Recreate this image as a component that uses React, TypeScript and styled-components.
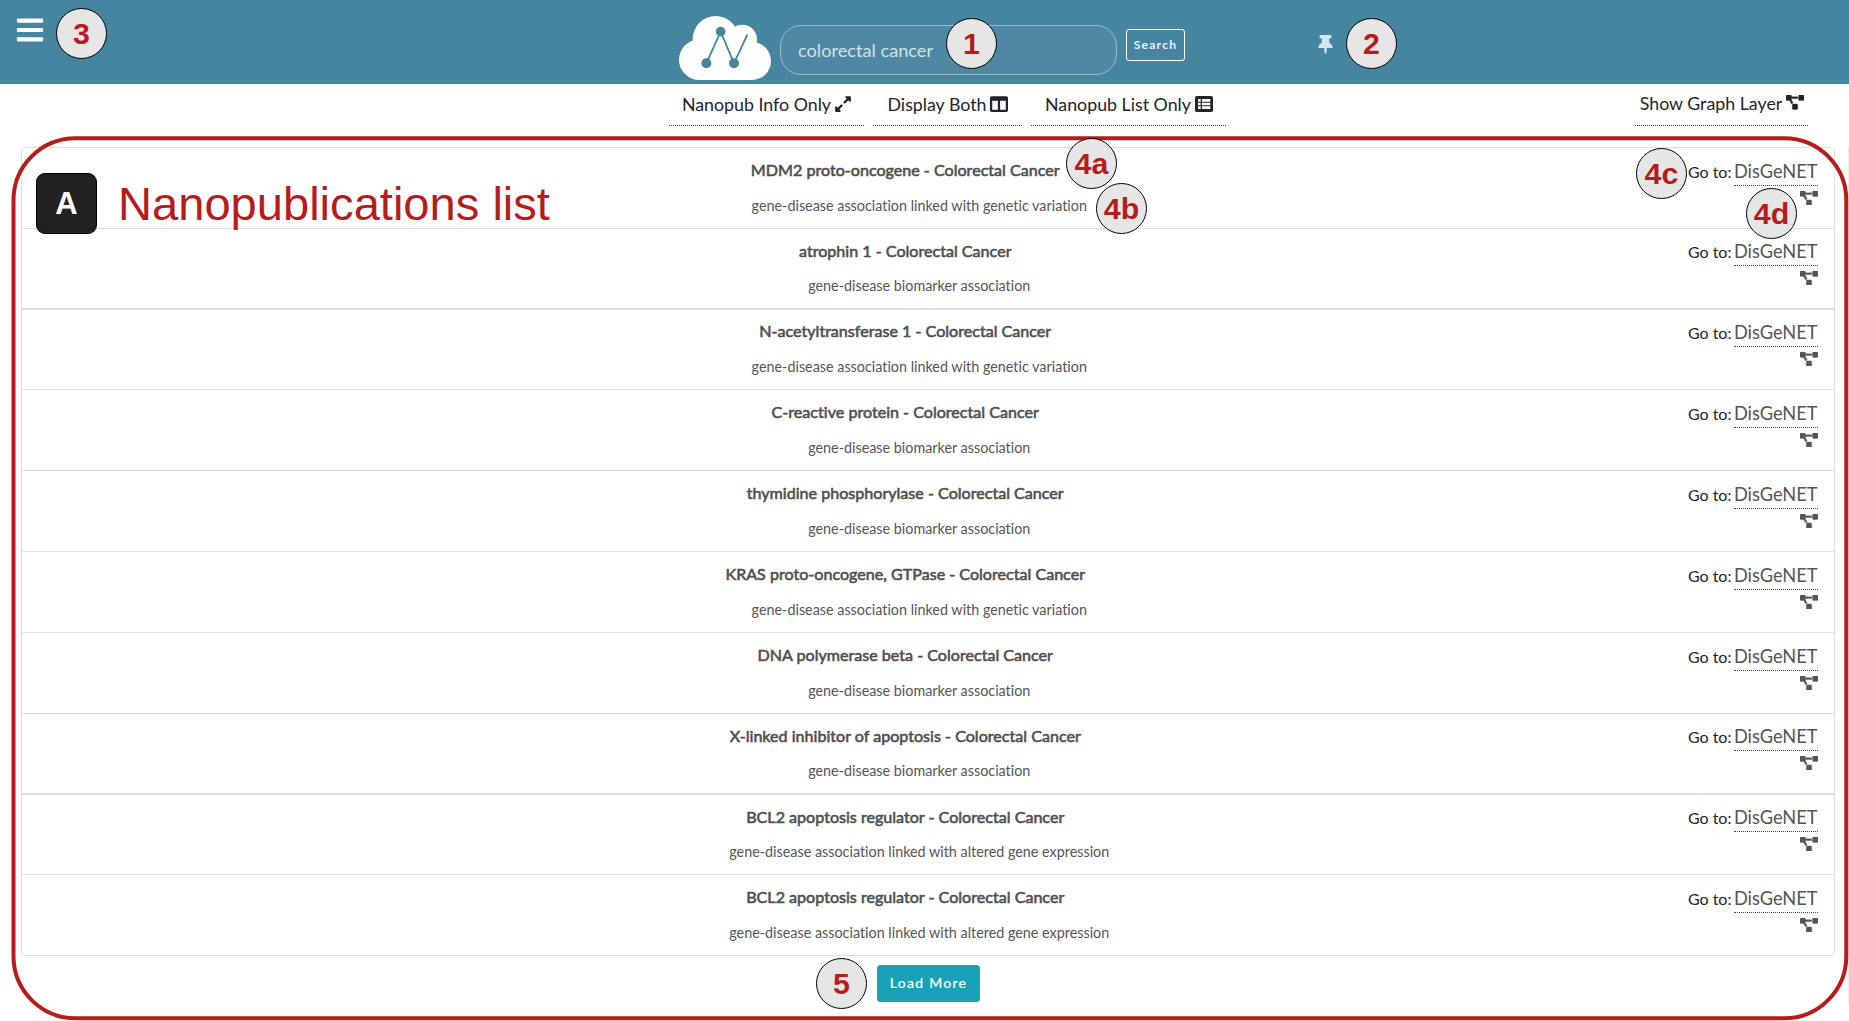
import React from "react";
import styled, { createGlobalStyle } from "styled-components";
import {
  FaBars,
  FaColumns,
  FaExpandAlt,
  FaProjectDiagram,
  FaThumbtack,
} from "react-icons/fa";

const GlobalStyle = createGlobalStyle`
  *, *::before, *::after { box-sizing: border-box; }
  html, body { margin: 0; padding: 0; background: #fff; overflow: hidden; }
  body { font-family: Lato, "Open Sans", sans-serif; color: #212529; font-variant-ligatures: none; }
  svg { display: block; flex: none; }
`;

const Page = styled.div`
  position: relative;
  width: 1849px;
  height: 1021px;
  display: flex;
  flex-direction: column;
  overflow: hidden;
`;

const Header = styled.header`
  height: 84px;
  flex: none;
  display: flex;
  align-items: flex-start;
  background: #4685a0;
`;

const MenuButton = styled.button`
  width: 679px;
  padding: 15px 0 0 15px;
  border: 0;
  background: none;
  color: #fff;
`;

const Logo = styled.svg`
  width: 92px;
  height: 64px;
  margin: 16px 9px 0 0;
`;

const SearchInput = styled.div`
  width: 337px;
  height: 50px;
  margin: 25px 9px 0 0;
  padding: 0 0 0 17px;
  display: flex;
  align-items: center;
  border: 1px solid #9bbdcb;
  border-radius: 21px;
  background: #4e88a2;
  color: #d3e2e9;
  font-size: 18.2px;
`;

const SearchButton = styled.button`
  width: 59px;
  height: 32px;
  margin: 29px 130.5px 0 0;
  padding: 0 0 1px 0;
  border: 1px solid #fff;
  border-radius: 3px;
  background: none;
  color: #e9f2f6;
  font: 700 12.2px Lato, sans-serif;
  letter-spacing: 1.2px;
`;

const Pin = styled.span`
  margin-top: 35px;
  color: #d5e5ec;
`;

const Toolbar = styled.nav`
  height: 63px;
  flex: none;
  display: flex;
  padding-left: 669px;
`;

const ViewGroup = styled.div`
  display: flex;
  gap: 9px;
`;

const ViewButton = styled.button<{ $width: number; $gap: number; $raise?: boolean }>`
  width: ${(p) => p.$width}px;
  height: 42px;
  padding: 0 0 ${(p) => (p.$raise ? 4 : 1)}px 1px;
  display: flex;
  align-items: center;
  justify-content: center;
  gap: ${(p) => p.$gap}px;
  border: 0;
  border-bottom: 1px dotted #444;
  background: none;
  color: #212529;
  font: 400 17.8px Lato, sans-serif;
  font-variant-ligatures: none;
  white-space: nowrap;
`;

const GraphToggle = styled.div`
  margin-left: 409px;
`;

const List = styled.ul`
  list-style: none;
  margin: 0 0 0 21px;
  padding: 0;
  width: 1814px;
  height: 809px;
  flex: none;
  border: 1px solid #dedede;
  border-radius: 4px;
`;

const Row = styled.li<{ $height: number; $line: number }>`
  height: ${(p) => p.$height}px;
  display: grid;
  grid-template-columns: 1fr 130px;
  padding-right: 16.5px;
  border-bottom: ${(p) => p.$line}px solid #dedede;
`;

const Body = styled.div`
  text-align: center;
`;

const Title = styled.h2<{ $lift: number }>`
  margin: 0;
  padding: ${(p) => 11 - p.$lift}px 0 ${(p) => p.$lift}px 101px;
  color: #4f4f4f;
  font-size: 16.1px;
  font-weight: 400;
  line-height: 22px;
  -webkit-text-stroke: 0.6px #4f4f4f;
`;

const Kind = styled.p<{ $lift: number }>`
  margin: 0;
  padding: ${(p) => 15 - p.$lift}px 0 0 129px;
  color: #555;
  font-size: 14.35px;
  line-height: 20px;
`;

const Actions = styled.div<{ $lift: number }>`
  margin-top: -${(p) => p.$lift}px;
  display: flex;
  flex-direction: column;
  align-items: flex-end;
  color: #555;
`;

const Source = styled.div`
  height: 38px;
  display: flex;
  align-items: baseline;
  padding-top: 11px;
  gap: 2.5px;
  color: #212529;
  font-size: 16px;
  line-height: 24px;
  white-space: nowrap;
`;

const SourceLink = styled.a`
  height: 27px;
  border-bottom: 1px dotted #444;
  color: #555;
  font-size: 18.24px;
  line-height: 24px;
`;

const GraphIcon = styled.span`
  margin-top: 5px;
`;

const Footer = styled.footer`
  display: flex;
  padding: 9px 0 0 877px;
`;

const LoadMore = styled.button`
  width: 103px;
  height: 37px;
  padding: 0 0 2px;
  border: 1px solid #3c9aab;
  border-radius: 3px;
  background: #17a2b8;
  color: #fff;
  font: 400 14px Lato, sans-serif;
  letter-spacing: 1.3px;
  -webkit-text-stroke: 0.2px #fff;
`;

const NextPanelEdge = styled.div`
  position: absolute;
  left: 1848px;
  top: 147px;
  width: 1px;
  height: 856px;
  background: #ececec;
`;

const Frame = styled.svg`
  position: absolute;
  left: 0;
  top: 0;
  pointer-events: none;
`;

const Marker = styled.span<{ $x: number; $y: number }>`
  position: absolute;
  left: ${(p) => p.$x}px;
  top: ${(p) => p.$y}px;
  width: 51px;
  height: 51px;
  padding: 0 0 1px 0;
  display: flex;
  align-items: center;
  justify-content: center;
  border: 1px solid #000;
  border-radius: 50%;
  background: #e6e6e6;
  color: #b71c1c;
  font: 700 30.4px "Liberation Sans", Arial, sans-serif;
`;

const SectionTag = styled.div`
  position: absolute;
  left: 36px;
  top: 173px;
  display: flex;
  align-items: center;
`;

const SectionLetter = styled.span`
  width: 61px;
  height: 61px;
  display: flex;
  align-items: center;
  justify-content: center;
  border: 1px solid #000;
  border-radius: 9px;
  background: #212121;
  color: #fff;
  font: 700 31px "Liberation Sans", Arial, sans-serif;
`;

const SectionName = styled.span`
  margin-left: 21px;
  color: #b71c1c;
  white-space: nowrap;
  font: 400 47.1px "Liberation Sans", Arial, sans-serif;
`;

const VARIATION = "gene-disease association linked with genetic variation";
const BIOMARKER = "gene-disease biomarker association";
const EXPRESSION = "gene-disease association linked with altered gene expression";

const nanopubs = [
  { gene: "MDM2 proto-oncogene", kind: VARIATION, height: 81, line: 1, titleLift: 0, lift: 0 },
  { gene: "atrophin 1", kind: BIOMARKER, height: 81, line: 2, titleLift: 0, lift: 1 },
  { gene: "N-acetyltransferase 1", kind: VARIATION, height: 80, line: 1, titleLift: 1, lift: 1 },
  { gene: "C-reactive protein", kind: BIOMARKER, height: 81, line: 1, titleLift: 0, lift: 0 },
  { gene: "thymidine phosphorylase", kind: BIOMARKER, height: 81, line: 1, titleLift: 0, lift: 0 },
  { gene: "KRAS proto-oncogene, GTPase", kind: VARIATION, height: 81, line: 1, titleLift: 0, lift: 0 },
  { gene: "DNA polymerase beta", kind: BIOMARKER, height: 81, line: 1, titleLift: 0, lift: 0 },
  { gene: "X-linked inhibitor of apoptosis", kind: BIOMARKER, height: 81, line: 2, titleLift: 0, lift: 1 },
  { gene: "BCL2 apoptosis regulator", kind: EXPRESSION, height: 80, line: 1, titleLift: 0, lift: 1 },
  { gene: "BCL2 apoptosis regulator", kind: EXPRESSION, height: 80, line: 0, titleLift: 0, lift: 0 },
];

const markers = [
  { label: "1", x: 946, y: 18 },
  { label: "2", x: 1346, y: 18 },
  { label: "3", x: 56, y: 8 },
  { label: "4a", x: 1066, y: 138 },
  { label: "4b", x: 1096, y: 183 },
  { label: "4c", x: 1636, y: 148 },
  { label: "4d", x: 1746, y: 188 },
  { label: "5", x: 816, y: 958 },
];

function CloudLogo() {
  return (
    <Logo viewBox="57 48 276 192" preserveAspectRatio="none">
      <g fill="#fff">
        <circle cx="118" cy="179" r="61" />
        <circle cx="167" cy="117" r="69" />
        <circle cx="247" cy="118" r="44" />
        <circle cx="276" cy="183" r="57" />
        <rect x="118" y="130" width="158" height="110" />
      </g>
      <path d="M139 190L182 95L222 190L262 104" fill="none" stroke="#4685a0" strokeWidth="5.5" />
      <g fill="#4685a0">
        <circle cx="182" cy="95" r="14.5" />
        <circle cx="139" cy="190" r="15" />
        <circle cx="222" cy="190" r="15" />
      </g>
    </Logo>
  );
}

function ListIcon() {
  return (
    <svg width="18" height="16" viewBox="0 0 54 48">
      <rect width="54" height="48" rx="5" fill="currentColor" />
      <path
        d="M9 9h8v8H9zM21 9h25v8H21zM9 20h8v8H9zM21 20h25v8H21zM9 31h8v8H9zM21 31h25v8H21z"
        fill="#fff"
      />
    </svg>
  );
}

const DiagramIcon = styled(FaProjectDiagram)`
  width: 18px;
  height: 14.4px;
  stroke: currentColor;
  stroke-width: 14px;
`;

export default function App() {
  return (
    <>
      <GlobalStyle />
      <Page>
        <Header>
          <MenuButton aria-label="Menu">
            <FaBars size={30} />
          </MenuButton>
          <CloudLogo />
          <SearchInput>colorectal cancer</SearchInput>
          <SearchButton>Search</SearchButton>
          <Pin>
            <FaThumbtack size={19} />
          </Pin>
        </Header>
        <Toolbar>
          <ViewGroup>
            <ViewButton $width={195} $gap={3}>
              Nanopub Info Only <FaExpandAlt size={18} />
            </ViewButton>
            <ViewButton $width={149} $gap={4}>
              Display Both <FaColumns size={18} />
            </ViewButton>
            <ViewButton $width={195} $gap={4}>
              Nanopub List Only <ListIcon />
            </ViewButton>
          </ViewGroup>
          <GraphToggle>
            <ViewButton $width={173} $gap={4} $raise>
              Show Graph Layer <DiagramIcon />
            </ViewButton>
          </GraphToggle>
        </Toolbar>
        <List>
          {nanopubs.map((n, i) => (
            <Row key={i} $height={n.height} $line={n.line}>
              <Body>
                <Title $lift={n.titleLift}>{n.gene} - Colorectal Cancer</Title>
                <Kind $lift={n.lift}>{n.kind}</Kind>
              </Body>
              <Actions $lift={n.lift}>
                <Source>
                  Go to: <SourceLink>DisGeNET</SourceLink>
                </Source>
                <GraphIcon>
                  <DiagramIcon />
                </GraphIcon>
              </Actions>
            </Row>
          ))}
        </List>
        <Footer>
          <LoadMore>Load More</LoadMore>
        </Footer>
        <NextPanelEdge />
        <Frame width="1849" height="1021">
          <rect x="13.5" y="138.2" width="1832.8" height="880.1" rx="62" fill="none" stroke="#b71c1c" strokeWidth="4" />
        </Frame>
        <SectionTag>
          <SectionLetter>A</SectionLetter>
          <SectionName>Nanopublications list</SectionName>
        </SectionTag>
        {markers.map((m) => (
          <Marker key={m.label} $x={m.x} $y={m.y}>
            {m.label}
          </Marker>
        ))}
      </Page>
    </>
  );
}
